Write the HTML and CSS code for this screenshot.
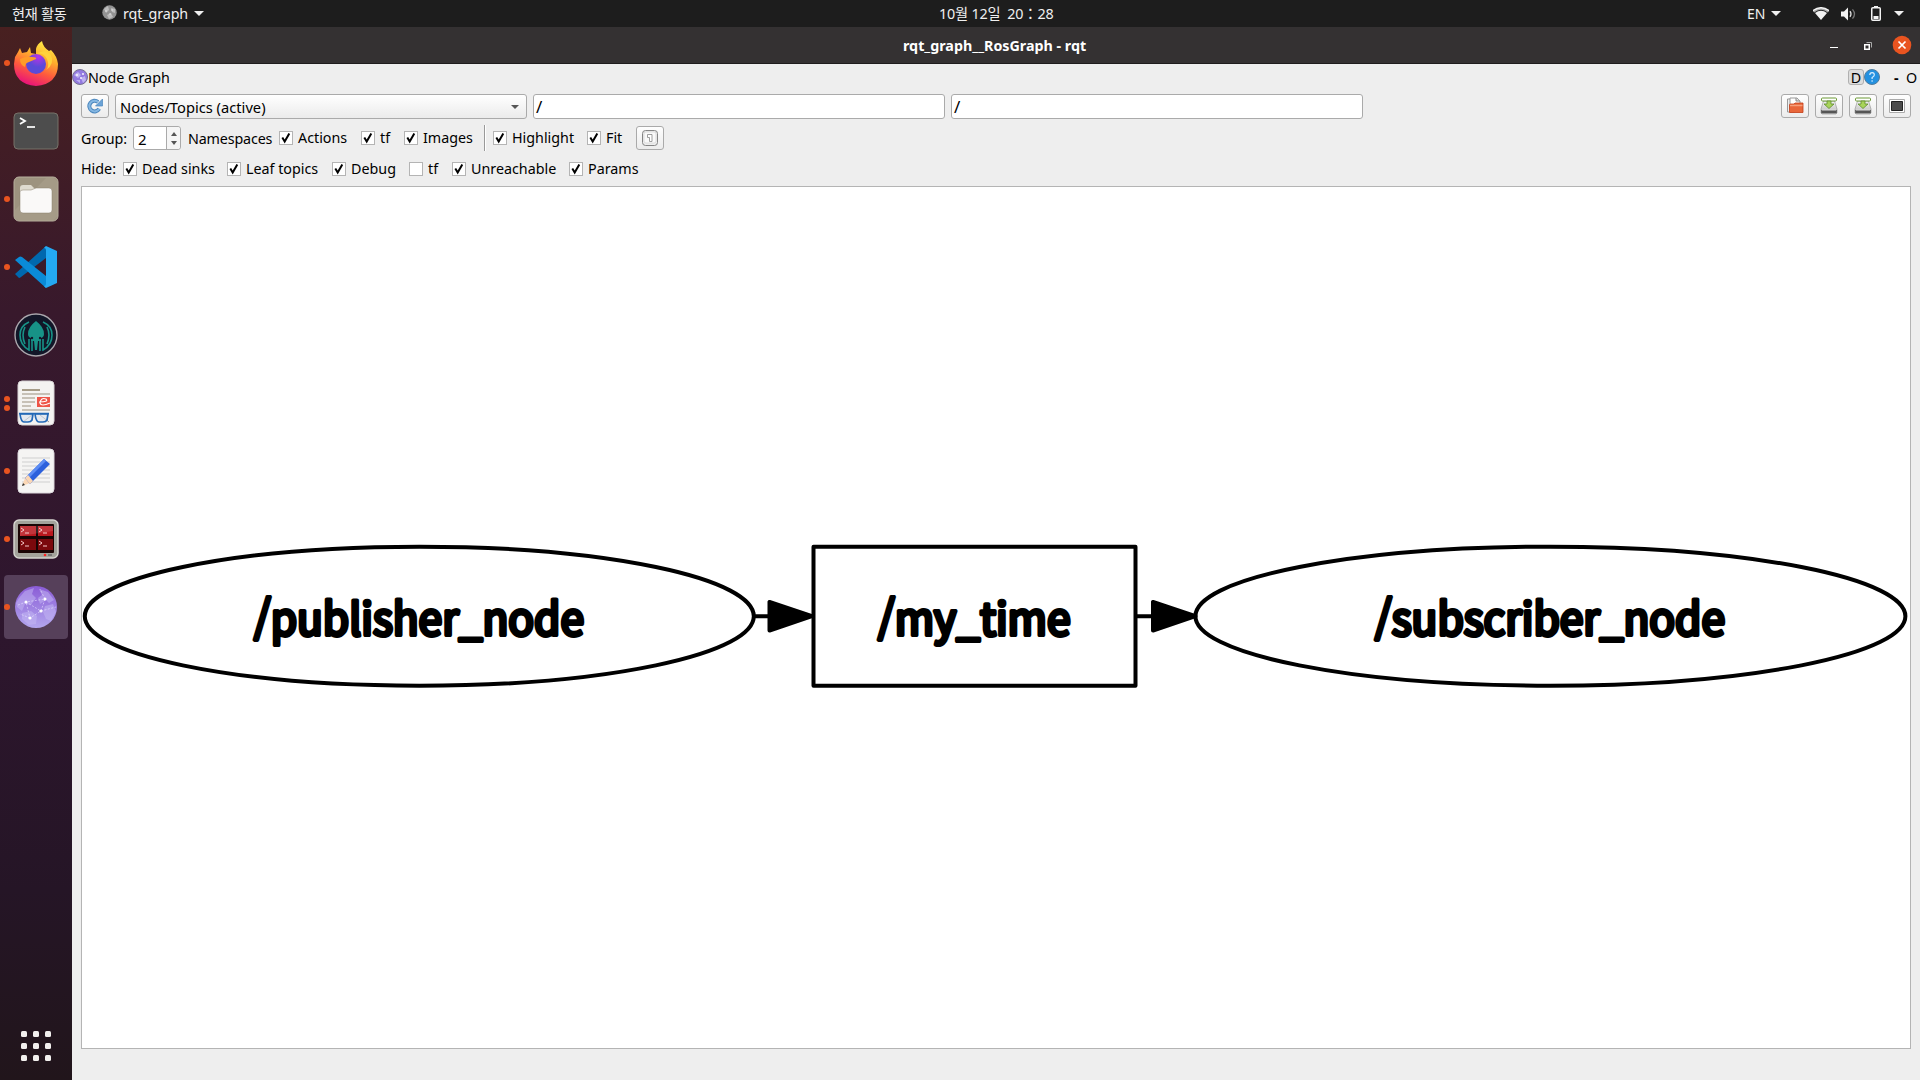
FILE: index.html
```html
<!DOCTYPE html>
<html lang="ko">
<head>
<meta charset="utf-8">
<title>rqt_graph__RosGraph - rqt</title>
<link rel="stylesheet" href="styles.css">
</head>
<body>
<svg class="defs" width="0" height="0">
  <defs>
    <linearGradient id="violet" x1="0" y1="0" x2="0" y2="1"><stop offset="0" stop-color="#8a5cd6"/><stop offset="1" stop-color="#b3a6ee"/></linearGradient>
    <linearGradient id="metal" x1="0" y1="0" x2="0" y2="1"><stop offset="0" stop-color="#f4f4f4"/><stop offset="1" stop-color="#b5b5b5"/></linearGradient>
    <symbol id="globe" viewBox="0 0 42 42">
      <circle cx="21" cy="21" r="21" fill="url(#violet)"/>
      <path d="M4 12 10 5l9-3-2 6 4 4-5 7-6-1-3 7-5-4-1-4zM24 3l9 3 6 8-5 3-3-3-6 4-2-6 4-3zM30 20l8-2 3 8-5 9-5-2-3-7zM7 27l9-2 6 5-1 8-7 1-7-6z" fill="#c5b9f4" opacity=".5"/>
      <path d="M3 19 11 16 30 13 26 25 15 32 11 16 26 25 41 21M15 32 5 28M30 13 25 3" fill="none" stroke="#ece8ff" stroke-width=".7" stroke-dasharray="2 1.5" opacity=".8"/>
      <g fill="#fff"><circle cx="11" cy="16" r="1.5"/><circle cx="30" cy="13" r="1.5"/><circle cx="26" cy="25" r="1.6"/><circle cx="15" cy="32" r="1.6"/></g>
    </symbol>
    <symbol id="tick" viewBox="0 0 12 12"><path d="M2.300 5.600 4.700 9.500 9.300 1.600" fill="none" stroke="#000" stroke-width="2"/></symbol>
    <symbol id="caret" viewBox="0 0 10 5"><path d="M0 0H10L5 5z" fill="currentColor"/></symbol>
    <symbol id="save" viewBox="0 0 18 18">
      <path d="M3.5 4h11L17 12v4l-1 1H2l-1-1v-4z" fill="url(#metal)" stroke="#999" stroke-width=".7"/>
      <path d="M1.2 13h15.6v3.2H1.2z" fill="#555"/><path d="M2 13h14" stroke="#ddd"/>
      <rect x="1.5" y="1" width="15" height="3" rx="1" fill="#fff" stroke="#6d9b36"/>
      <path d="M7 4h4v3h3L9 11.5 4 7h3z" fill="#a8d45a" stroke="#5f8b2d" stroke-width=".8"/>
    </symbol>
  </defs>
</svg>

<header class="panel">
  <span class="activities">현재 활동</span>
  <svg class="app-icon" width="15" height="15" viewBox="0 0 15 15"><circle cx="7.5" cy="7.5" r="7.2" fill="#939393"/><path d="M2 4 6 1l1 4-3 3zM9 3l4 1v4l-3-1zM5 10l4-2 2 4-4 2z" fill="#bdbdbd"/><g fill="#eee"><circle cx="4" cy="6" r=".7"/><circle cx="10" cy="5" r=".7"/><circle cx="8" cy="9" r=".7"/></g></svg>
  <span class="app-name">rqt_graph</span>
  <svg class="app-caret" width="10" height="5"><use href="#caret"/></svg>
  <span class="clock">10월 12일&nbsp; 20：28</span>
  <div class="status">
    <span class="lang">EN</span>
    <svg width="10" height="5"><use href="#caret"/></svg>
    <svg class="wifi" width="16" height="14" viewBox="0 0 16 14"><path d="M0 4.200Q8-2.600 16 4.200L14.800 5.500Q8 0 1.200 5.500z" fill="#aaa"/><path d="M0 3.700Q8-2.300 16 3.700" fill="none" stroke="#f2f2f2" stroke-width="1.400"/><path d="M2 6Q8 1.700 14 6L8 13z" fill="#f2f2f2"/></svg>
    <svg class="sound" width="15" height="14" viewBox="0 0 15 14"><path d="M0 4.500h3L7 .5v13L3 9.500H0z" fill="#f2f2f2"/><path d="M9 4.200Q11 7 9 9.800" fill="none" stroke="#ddd" stroke-width="1.300"/><path d="M11.500 2.300Q15.500 7 11.500 11.700" fill="none" stroke="#777" stroke-width="1.300"/></svg>
    <svg class="battery" width="10" height="15" viewBox="0 0 10 15"><path d="M3 0h4v2H3z" fill="#f2f2f2"/><rect x=".75" y="1.750" width="8.500" height="12.500" rx="1" fill="none" stroke="#f2f2f2" stroke-width="1.500"/><path d="M2.500 10h5v3h-5z" fill="#f2f2f2"/></svg>
    <svg class="menu-caret" width="10" height="5"><use href="#caret"/></svg>
  </div>
</header>

<div class="desktop">
  <nav class="dock">
    <div class="launcher one"><svg width="46" height="46" viewBox="0 0 46 46">
      <defs><linearGradient id="fire" x1=".75" y1="0" x2=".35" y2="1"><stop offset="0" stop-color="#fff24a"/><stop offset=".35" stop-color="#ffb02c"/><stop offset=".65" stop-color="#ff5c3c"/><stop offset="1" stop-color="#e8107c"/></linearGradient><radialGradient id="core" cx=".6" cy=".15"><stop offset="0" stop-color="#b833e6"/><stop offset="1" stop-color="#5a4ad8"/></radialGradient></defs>
      <path d="M2 17 5 12l2-4 2 5 5-1 3-5 1 6 5 1V9q1-5 6-8 1 6 7 10l2-1q6 6 7 14 0 20-22 22Q1 44 1 24z" fill="url(#fire)"/>
      <circle cx="23" cy="24" r="10" fill="url(#core)"/>
      <path d="M7 19q6-3 12-2 5 0 4 2l-7 3q-4 1-4 5-5-2-5-8z" fill="#ff9c28"/><path d="M23 14q7-2 11 5 3 7-1 11 9-6 5-15Q33 8 23 14" fill="#ffd23c"/>
    </svg></div>
    <div class="launcher"><svg width="46" height="38" viewBox="0 0 46 38"><rect x="1" y="1" width="44" height="36" rx="4" fill="#4d4d4d" stroke="#777269"/><path d="m7 6 5 3-5 3" fill="none" stroke="#fff" stroke-width="1.800"/><path d="M14 15h8" stroke="#fff" stroke-width="1.700"/></svg></div>
    <div class="launcher one"><svg width="46" height="46" viewBox="0 0 46 46"><rect x="1" y="1" width="44" height="44" rx="5" fill="#9d937f" stroke="#b8b09e"/><path d="M33 2 2 34v8l3 2h36l3-3V5l-3-3z" fill="#aba28e" opacity=".55"/><path d="M7 12q0-3 3-3h8l4 4v6H7z" fill="#dfdbcf"/><path d="M7 16q0-2 3-2h8l5-2h13q3 0 3 3v19q0 3-3 3H10q-3 0-3-3z" fill="#faf9f8" stroke="#8a806e" stroke-width=".5"/></svg></div>
    <div class="launcher one"><svg width="42" height="42" viewBox="0 0 42 42"><path d="m0 28 4 4q1 0 2-1L31 12V0z" fill="#0068ae"/><path d="M0 14l4-3q1-1 3 0l24 19v12z" fill="#0a8bd8"/><path d="m31 0 11 5v32l-11 5-2-2q2 0 2-2V4q0-2-2-2z" fill="#24a9f2"/></svg></div>
    <div class="launcher"><svg width="44" height="44" viewBox="0 0 44 44"><circle cx="22" cy="22" r="21" fill="#121628" stroke="#aaa7ad" stroke-width="1.400"/><path d="M22 8q8 6 8 13 0 3-3 4v3h-3l-1 9h-2l-1-9h-3v-3q-3-1-3-4 0-7 8-13" fill="#179287"/><g fill="none" stroke="#179287" stroke-width="1.600"><path d="M15 9q-9 4-9 13 0 10 9 15V26M18 28v10M11 14q-4 8 0 17M29 9q9 4 9 13 0 10-9 15V26M26 28v10M33 14q4 8 0 17"/></g><g fill="#121628"><circle cx="18" cy="25" r="1.200"/><circle cx="26" cy="25" r="1.200"/></g></svg></div>
    <div class="launcher two"><svg width="38" height="46" viewBox="0 0 38 46"><rect x="1" y="1" width="36" height="44" rx="4" fill="#f4f3f1" stroke="#d8d4d6"/><path d="M5 10h18" stroke="#a69c88" stroke-width="2"/><path d="M5 14h28M5 18h13M5 22h13M5 26h9M5 30h28" stroke="#c7c1b7" stroke-width="1.800"/><rect x="20" y="17" width="13" height="10" fill="#ee5548"/><path d="M22 22q10 0 7-3-5-2-6 4 1 4 10 0" fill="none" stroke="#fff" stroke-width="1.200"/><path d="M6 42l9-7M32 42l-9-7" stroke="#999" stroke-width="1"/><path d="M3 34h13l-1 6q-1 2-4 2H7q-3 0-4-8zM18 34h13l-1 6q-1 2-4 2h-4q-3 0-4-8z" fill="#d8e2ee" fill-opacity=".6" stroke="#2369b7" stroke-width="1.700"/><path d="M2 33.500h30" stroke="#2369b7" stroke-width="1.500"/></svg></div>
    <div class="launcher one"><svg width="38" height="46" viewBox="0 0 38 46"><rect x="1" y="1" width="36" height="44" rx="4" fill="#f5f4f3" stroke="#dcd8dc"/><path d="M5 10h28M5 14h28M5 18h28M5 22h28M5 26h28M5 30h28M5 34h28" stroke="#cfcfcf"/><path d="M5 38 8 30l5 5z" fill="#fbd7b5"/><path d="M8 30 27 11l6 5-20 20z" fill="#2c60dc"/><path d="m8 30 19-19 2 2-19 19z" fill="#5c8cf4"/><path d="m8 30 3-3 5 6-3 3z" fill="#fbd7b5"/><path d="m5 38 1-3 2 2z" fill="#333"/></svg></div>
    <div class="launcher one"><svg width="46" height="40" viewBox="0 0 46 40"><rect x="1" y="1" width="44" height="38" rx="5" fill="#a3a39b" stroke="#d5d5cf" stroke-width="1.500"/><rect x="5" y="5" width="36" height="29" rx="1" fill="#1a0505"/><path d="M7 7h16v10H7zM25 7h15v10H25z" fill="#b9181e"/><path d="M7 20h16v11H7zM25 20h15v11H25z" fill="#7b090d"/><path d="M7 7h33v5L7 17z" fill="#fff" opacity=".13"/><path d="m8 9 3 2-3 2m4 1h4M26 9l3 2-3 2m4 1h4M8 22l3 2-3 2m4 1h4m10-5 3 2-3 2m4 1h4" fill="none" stroke="#f5caca" stroke-width="1"/><circle cx="32" cy="36" r="1.300" fill="#f22"/><path d="M35 36h4" stroke="#777" stroke-width="2"/></svg></div>
    <div class="launcher one selected"><svg width="42" height="42"><use href="#globe"/></svg></div>
    <div class="show-apps"><i></i><i></i><i></i><i></i><i></i><i></i><i></i><i></i><i></i></div>
  </nav>

  <main class="window">
    <div class="titlebar">
      <span class="title">rqt_graph__RosGraph - rqt</span>
      <div class="window-buttons">
        <svg width="8" height="10" viewBox="0 0 8 10"><path d="M0 7.500h8" stroke="#fff"/></svg>
        <svg width="8" height="10" viewBox="0 0 8 10"><path d="M.75 4.750h4.500v4.500H.75z" fill="none" stroke="#fff" stroke-width="1.500"/><path d="M2.500 2.500h5v5" fill="none" stroke="#aaa"/></svg>
        <svg width="20" height="20" viewBox="0 0 20 20"><circle cx="10" cy="10" r="9.300" fill="#e95420"/><path d="m6.500 6.500 7 7m0-7-7 7" stroke="#fff" stroke-width="1.700"/></svg>
      </div>
    </div>

    <div class="dock-title">
      <svg width="16" height="16" viewBox="0 0 16 16"><circle cx="8" cy="8" r="7.500" fill="#9379e0" stroke="#77728e"/><path d="M2 6l4-3 3 3-3 3zM9 9l4-2 1 4-3 3zM4 11l4 0 0 3z" fill="#bfb2f2"/><g fill="#fff"><circle cx="5" cy="6" r=".9"/><circle cx="11" cy="5" r=".9"/><circle cx="9" cy="9" r=".9"/></g></svg>
      <span class="dock-name">Node Graph</span>
      <span class="d-button">D</span>
      <svg class="help" width="16" height="16" viewBox="0 0 16 16"><circle cx="8" cy="8" r="7.500" fill="#2391e0" stroke="#527d9e"/><path d="M5.800 6q0-2.300 2.300-2.300T10.300 6Q10.300 7.200 8.100 8.600V10M8.100 11.200v1.500" fill="none" stroke="#d9efff" stroke-width="1.200"/></svg>
      <span class="dash">-</span>
      <span class="ring">O</span>
    </div>

    <div class="toolbar">
      <span class="tool"><svg width="16" height="16" viewBox="0 0 16 16"><path d="M12.200 10.800A5.300 5.300 0 1 1 11 4" fill="none" stroke="#4b86bd" stroke-width="4"/><path d="M12.200 10.800A5.300 5.300 0 1 1 11 4" fill="none" stroke="#85b7e2" stroke-width="2"/><path d="M15.500 1v7H8.500z" fill="#6ba3d7" stroke="#4b86bd" stroke-width=".7"/></svg></span>
      <div class="combo"><span>Nodes/Topics (active)</span><svg width="8" height="4" viewBox="0 0 10 5"><use href="#caret"/></svg></div>
      <div class="field">/</div>
      <div class="field">/</div>
      <div class="file-tools">
        <span class="tool"><svg width="18" height="18" viewBox="0 0 18 18"><path d="M1.500 2h7v13h-7z" fill="#eee" stroke="#999"/><path d="M4 1h7l3 3v8H4z" fill="#fff" stroke="#999"/><path d="M10 1v3h4" fill="#ddd" stroke="#888"/><path d="M3.500 15.500V8q0-1 1-1H8l1-1h8v9.500z" fill="#e8663a" stroke="#c33c16" stroke-width=".8"/><path d="M4 8.500h12.500" stroke="#f5a07c" stroke-width="1.500"/></svg></span>
        <span class="tool"><svg width="18" height="18"><use href="#save"/></svg></span>
        <span class="tool"><svg width="18" height="18"><use href="#save"/></svg></span>
        <span class="tool"><svg width="16" height="14" viewBox="0 0 16 14"><path d="M.5.5h15v13H.5z" fill="#fff" stroke="#aaa"/><path d="M2.500 2.500h11v9h-11z" fill="#4b4b4b" stroke="#222"/></svg></span>
      </div>
    </div>

    <div class="options group-row">
      <span class="w-group">Group:</span>
      <div class="spin"><span>2</span><div class="arrows"><svg width="6" height="4" viewBox="0 0 6 4"><path d="M0 4h6L3 0z"/></svg><svg width="6" height="4" viewBox="0 0 6 4"><path d="M0 0h6L3 4z"/></svg></div></div>
      <span class="w-ns">Namespaces</span>
      <label class="check"><svg class="box"><use href="#tick"/></svg><span>Actions</span></label>
      <label class="check"><svg class="box"><use href="#tick"/></svg><span>tf</span></label>
      <label class="check"><svg class="box"><use href="#tick"/></svg><span>Images</span></label>
      <i class="divider"></i>
      <label class="check"><svg class="box"><use href="#tick"/></svg><span>Highlight</span></label>
      <label class="check"><svg class="box"><use href="#tick"/></svg><span>Fit</span></label>
      <span class="tool fit-tool"><svg width="16" height="16" viewBox="0 0 16 16"><rect x=".5" y=".5" width="15" height="15" rx="3" fill="#eee" stroke="#858585"/><rect x="2" y="2" width="12" height="11" rx="2" fill="#fafafa" stroke="#ccc" stroke-width=".6"/><path d="M5.500 4.500h4.500v7H7.500v-4h-2z" fill="#fff" stroke="#888" stroke-width=".8"/></svg></span>
    </div>

    <div class="options hide-row">
      <span>Hide:</span>
      <label class="check"><svg class="box"><use href="#tick"/></svg><span>Dead sinks</span></label>
      <label class="check"><svg class="box"><use href="#tick"/></svg><span>Leaf topics</span></label>
      <label class="check"><svg class="box"><use href="#tick"/></svg><span>Debug</span></label>
      <label class="check"><svg class="box"></svg><span>tf</span></label>
      <label class="check"><svg class="box"><use href="#tick"/></svg><span>Unreachable</span></label>
      <label class="check"><svg class="box"><use href="#tick"/></svg><span>Params</span></label>
    </div>

    <section class="graph">
      <svg width="1828" height="861" viewBox="82 187 1828 861">
        <g fill="none" stroke="#000" stroke-width="4" stroke-linejoin="round">
          <ellipse cx="419.300" cy="616.200" rx="334.500" ry="69.500"/>
          <rect x="813.500" y="546.700" width="322" height="139"/>
          <ellipse cx="1550.400" cy="616.200" rx="355" ry="69.500"/>
          <path d="M754 616.200h16M1135.500 616.200h18"/>
          <path d="M769.500 602v28.500L812 616.200zM1153 602v28.500l42.500-14.300z" fill="#000"/>
        </g>
        <g class="node-labels">
          <text x="254" y="635" textLength="330" lengthAdjust="spacingAndGlyphs">/publisher_node</text>
          <text x="878" y="635" textLength="192.500" lengthAdjust="spacingAndGlyphs">/my_time</text>
          <text x="1375" y="635" textLength="350" lengthAdjust="spacingAndGlyphs">/subscriber_node</text>
        </g>
      </svg>
    </section>
  </main>
</div>
</body>
</html>
```
FILE: styles.css
```css
* { box-sizing: border-box; }

body {
  margin: 0;
  width: 1920px;
  height: 1080px;
  overflow: hidden;
  display: flex;
  flex-direction: column;
  font: 14.3px/20px "Noto Sans", "Noto Sans CJK KR", sans-serif;
  color: #000;
  background: #eee;
}

svg { display: block; flex: none; }
span { white-space: nowrap; }
.defs { position: absolute; }

.panel {
  height: 27px;
  flex: none;
  display: grid;
  grid-template-columns: 90px 21px 71px 745px 808px 173px;
  padding-left: 12px;
  align-items: center;
  background: #1d1d1d;
  color: #f0f0f0;
}
.activities { font-size: 14.200px; letter-spacing: -0.300px; padding-top: 1px; }
.app-icon { margin-top: -2px; }
.app-name { letter-spacing: -0.100px; }
.clock { letter-spacing: -0.200px; padding-top: 1px; }
.status { display: grid; grid-template-columns: 24px 42px 28px 30px 23px 10px; align-items: center; }
.lang { font-size: 14px; }

.desktop { flex: 1; min-height: 0; display: flex; }

.dock {
  width: 72px;
  flex: none;
  display: flex;
  flex-direction: column;
  align-items: center;
  gap: 4px;
  padding: 4px 0 19px;
  background: linear-gradient(#482020, #38192c 27%, #2e162e 55%, #251526 82%, #21151b);
}
.launcher {
  position: relative;
  width: 64px;
  height: 64px;
  flex: none;
  display: grid;
  place-items: center;
  border-radius: 4px;
}
.selected { background: #56405a; }
.one::before, .two::before {
  content: "";
  position: absolute;
  left: 0;
  top: 29px;
  width: 6px;
  height: 6px;
  border-radius: 50%;
  background: #e95420;
}
.two::before { top: 25px; box-shadow: 0 9px #e95420; }
.show-apps {
  margin-top: auto;
  display: grid;
  grid-template-columns: repeat(3, 6px);
  gap: 6px;
}
.show-apps i { height: 6px; border-radius: 1.500px; background: #f2f0ee; }

.window { flex: 1; min-width: 0; display: flex; flex-direction: column; }

.titlebar {
  height: 37px;
  display: grid;
  grid-template-columns: 831px 927px 90px;
  align-items: center;
  background: #343132;
  border-bottom: 1px solid #1f1c1d;
  color: #fff;
}
.title { grid-column: 2; font-weight: 700; font-size: 14.300px; padding-top: 1px; }
.window-buttons { display: grid; grid-template-columns: 34px 28px 20px; align-items: center; }

.dock-title {
  height: 26px;
  display: grid;
  grid-template-columns: 16px 1760px 16px 16px 13px 13px 15px;
  align-items: center;
}
.dock-name { padding-top: 2px; }
.d-button {
  height: 16px;
  line-height: 16px;
  text-align: center;
  border: 1px solid #b0b0b0;
  border-radius: 3px;
  background: #ddd;
}
.dash { grid-column: 6; font-weight: 700; padding: 1px 0 0 1px; }
.ring { padding-top: 1px; }

.toolbar {
  display: grid;
  grid-template-columns: 28px 412px 412px 412px 1fr;
  gap: 6px;
  padding: 4px 9px 0;
}
.tool {
  width: 28px;
  height: 24px;
  display: grid;
  place-items: center;
  border: 1px solid #aaa;
  border-radius: 3px;
  background: linear-gradient(#fefefe, #ececec);
}
.combo, .field { height: 25px; border: 1px solid #aaa; border-radius: 3px; display: flex; align-items: center; }
.combo { justify-content: space-between; padding: 0 7px 0 4px; background: linear-gradient(#fff, #ebebeb); font-size: 14.700px; }
.combo svg { color: #555; }
.field { padding: 1px 0 0 2px; background: #fff; font-size: 17px; }
.file-tools { display: flex; gap: 6px; justify-content: flex-end; }

.options { display: grid; align-items: center; padding-left: 9px; }
.group-row { height: 26px; margin-top: 6px; grid-template-columns: 52px 55px 91px 82px 43px 80px 9px 94px 49px 28px; }
.group-row > span:not(.tool) { padding-top: 1px; }
.w-ns { letter-spacing: -0.150px; }
.hide-row { height: 22px; margin-top: 7px; grid-template-columns: 42px 104px 105px 77px 43px 117px 80px; }
.check { display: flex; align-items: center; gap: 5px; }
.box { width: 14px; height: 14px; border: 1px solid #b4b4b4; background: #fff; }
.group-row .check { height: 24px; padding-bottom: 1px; }
.divider { width: 2px; height: 26px; background: linear-gradient(90deg, #999 50%, #fff 50%); }
.spin { width: 48px; height: 24px; display: flex; border: 1px solid #aaa; border-radius: 3px; background: #fff; }
.spin > span { width: 32px; padding-left: 4px; line-height: 24px; font-size: 15px; }
.arrows {
  flex: 1;
  display: flex;
  flex-direction: column;
  align-items: center;
  justify-content: center;
  gap: 5px;
  border-left: 1px solid #aaa;
  background: #f5f5f5;
  border-radius: 0 3px 3px 0;
  fill: #555;
}

.graph { width: 1830px; height: 863px; margin: 6px 0 0 9px; border: 1px solid #b4b4b4; background: #fff; }
.node-labels {
  font: 44px "Noto Sans CJK KR", sans-serif;
  fill: #000;
  stroke: #000;
  stroke-width: 4px;
  stroke-linejoin: round;
}
```
